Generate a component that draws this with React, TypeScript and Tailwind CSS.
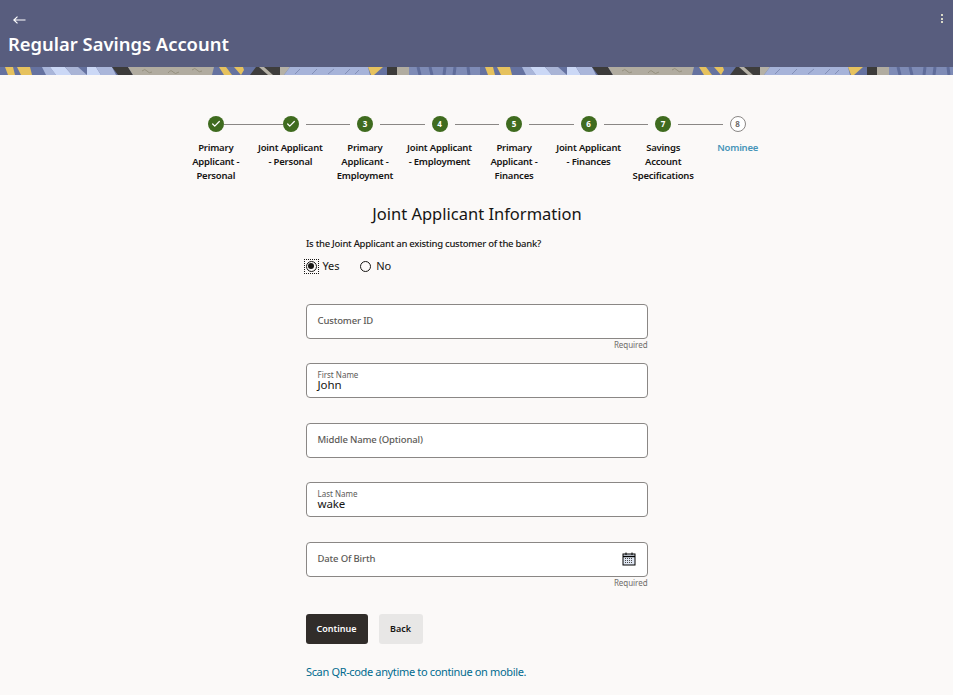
import React from 'react';
import { Check } from 'lucide-react';

type Step = {
  label: string[];
  done?: boolean;
};

const steps: Step[] = [
  { label: ['Primary', 'Applicant -', 'Personal'], done: true },
  { label: ['Joint Applicant', '- Personal'], done: true },
  { label: ['Primary', 'Applicant -', 'Employment'] },
  { label: ['Joint Applicant', '- Employment'] },
  { label: ['Primary', 'Applicant -', 'Finances'] },
  { label: ['Joint Applicant', '- Finances'] },
  { label: ['Savings', 'Account', 'Specifications'] },
];

// one period of the banner artwork, it repeats every 480px
function BannerArt({ x }: { x: number }) {
  return (
    <g transform={`translate(${x} 0)`}>
      <rect x="0" y="0" width="480" height="8" fill="#6572a0" />
      <polygon points="5,0 13,0 15,8 8,8" fill="#e6c25e" />
      <polygon points="17,0 30,0 32,8 21,8" fill="#e6c25e" />
      <polygon points="42,0 50,0 56,8 46,8" fill="#a9b6da" />
      <polygon points="50,0 65,0 72,8 56,8" fill="#cbd8f6" />
      <polygon points="65,0 78,0 87,8 72,8" fill="#a9b4d6" />
      <polygon points="87,0 96,0 101,8 87,8" fill="#cbd8f6" />
      <polygon points="96,0 112,0 116,8 101,8" fill="#aab6da" />
      <polygon points="112,0 128,0 133,8 118,8" fill="#3c3b3a" />
      <polygon points="128,0 214,0 212,8 133,8" fill="#b1aca0" />
      <path d="M142 4 q3 -3 5 0 t5 1 M168 6 q3 -4 5 -1 t6 0 M192 3 q3 -3 5 0 t5 1" stroke="#96917f" strokeWidth="1" fill="none" />
      <polygon points="219,0 226,0 232,8 224,8" fill="#e6c25e" />
      <polygon points="234,0 243,0 244,3 241,8" fill="#e6c25e" />
      <polygon points="256,0 283,0 280,8 250,8" fill="#3e3d3c" />
      <polygon points="259,0 264,0 273,8 268,8" fill="#b5b1a6" />
      <polygon points="280,0 290,0 284,8 280,8" fill="#b5b1a6" />
      <polygon points="290,0 368,0 370,8 284,8" fill="#a6b3d9" />
      <path d="M295 7 l5 -5 M312 7 l5 -5 M328 7 l6 -5 M345 7 l5 -5 M355 7 l4 -4" stroke="#8390b8" strokeWidth="1" />
      <polygon points="368,0 383,0 374,8 371,8" fill="#e6c25e" />
      <rect x="387" y="0" width="10" height="8" fill="#3c3b3a" />
      <rect x="397" y="0" width="12" height="8" fill="#b1aca0" />
      <rect x="409" y="0" width="71" height="8" fill="#7e8bb6" />
      <path d="M418 0 l2 8 M430 0 l2 8 M445 0 l-1 8 M455 0 l-1 8 M468 0 l1 8" stroke="#5f6c9a" strokeWidth="3" />
    </g>
  );
}

function TextField({ label, value, helper, calendar }: { label: string; value?: string; helper?: string; calendar?: boolean }) {
  return (
    <div className="h-[59.5px]">
      <div className="h-[35px] flex items-center justify-between bg-white border border-[#8a8785] rounded-[4px] pl-[11px] pr-[11px]">
        {value ? (
          <div className="flex flex-col pb-[2px]">
            <span className="text-[8px] leading-[9px] text-[#5c5a57]">{label}</span>
            <span className="text-[11.5px] leading-[11px] tracking-[-0.1px] text-[#161513]">{value}</span>
          </div>
        ) : (
          <span className="text-[9.5px] font-medium leading-[14px] tracking-[-0.15px] text-[#5c5a57]">{label}</span>
        )}
        {calendar && (
          <svg width="14" height="14" viewBox="0 0 14 14" fill="none">
            <rect x="1" y="2" width="12" height="11" fill="#dfe6f2" stroke="#000000" strokeWidth="1" />
            <path d="M1 4.5h12" stroke="#000000" strokeWidth="1.4" />
            <path d="M4 0.5v2.5M10 0.5v2.5" stroke="#000000" strokeWidth="1" />
            <path d="M3 6.5h8M3 8.5h8M3 10.5h8" stroke="#4a4846" strokeWidth="1" strokeDasharray="1 1" />
          </svg>
        )}
      </div>
      {helper && <div className="text-right text-[8px] leading-[12px] tracking-[-0.05px] text-[#6f6d6a]">{helper}</div>}
    </div>
  );
}

export default function App() {
  return (
    <div className="min-h-[695px] h-[695px] overflow-hidden bg-[#fbf9f8] text-[#161513] font-['Noto_Sans',sans-serif]">
      <header className="h-[67px] bg-[#585d7e] relative text-white">
        <div className="pt-[14px] pl-[13px] h-[33px]">
          <svg width="13" height="12" viewBox="0 0 13 12" fill="none" stroke="white" strokeWidth="1.2">
            <path d="M0.8 6H12.5M4.5 2.6L0.8 6L4.5 9.4" />
          </svg>
        </div>
        <h1 className="pl-[8px] text-[18.4px] leading-[22px] font-semibold">Regular Savings Account</h1>
        <div className="absolute right-[10px] top-[14px] flex flex-col gap-[1.5px]">
          <span className="w-[2px] h-[2px] bg-[#d9d9c8]" />
          <span className="w-[2px] h-[2px] bg-[#d9d9c8]" />
          <span className="w-[2px] h-[2px] bg-[#d9d9c8]" />
        </div>
      </header>
      <svg className="block w-full h-[8px]" viewBox="0 0 953 8" preserveAspectRatio="none">
        <BannerArt x={0} />
        <BannerArt x={480} />
      </svg>

      <div className="w-[597px] mx-auto pt-[41px] pl-[0.5px]">
        <div className="flex items-center h-[16px] pl-[29.5px] pr-[29.5px]">
          {steps.map((step, i) => (
            <React.Fragment key={i}>
              <div className="w-[16px] h-[16px] shrink-0 rounded-full bg-[#3f6b1f] flex items-center justify-center text-white text-[8px] font-bold leading-none">
                {step.done ? <Check size={10} strokeWidth={3} /> : i + 1}
              </div>
              <div className="flex-1 flex">
                <div className={i === 0 ? 'flex-1 h-px bg-[#8a8785]' : 'flex-1 h-px bg-[#8a8785] mx-[7px]'} />
              </div>
            </React.Fragment>
          ))}
          <div className="w-[16px] h-[16px] shrink-0 rounded-full border border-[#8a8785] bg-white flex items-center justify-center text-[#5c5a57] text-[8px] font-semibold leading-none">
            8
          </div>
        </div>
        <div className="grid grid-cols-8 mt-[9px] h-[46px]">
          {steps.map((step, i) => (
            <div key={i} className="text-center text-[9.5px] leading-[14px] font-semibold tracking-[-0.2px] whitespace-nowrap">
              {step.label.map((line) => (
                <div key={line}>{line}</div>
              ))}
            </div>
          ))}
          <div className="text-center text-[9.5px] leading-[14px] font-semibold tracking-[-0.2px] text-[#4795b8]">Nominee</div>
        </div>
      </div>

      <div className="w-[342px] mx-auto">
        <h2 className="text-center text-[16.5px] leading-[24px] mt-[15px] pl-[1px] whitespace-nowrap">Joint Applicant Information</h2>
        <p className="text-[9.5px] leading-[14px] font-medium tracking-[-0.27px] mt-[11px] pl-[0.5px]">Is the Joint Applicant an existing customer of the bank?</p>
        <div className="flex items-center h-[14px] mt-[8px] text-[11px] leading-[14px] tracking-[-0.1px]">
          <span className="w-[13px] h-[13px] -ml-[1px] outline-1 outline-dotted outline-[#161513] flex items-center justify-center">
            <span className="w-[11px] h-[11px] rounded-full border border-[#161513] flex items-center justify-center">
              <span className="w-[6px] h-[6px] rounded-full bg-[#161513]" />
            </span>
          </span>
          <span className="ml-[5px]">Yes</span>
          <span className="ml-[21px] w-[11px] h-[11px] rounded-full border border-[#161513]" />
          <span className="ml-[5px]">No</span>
        </div>

        <div className="mt-[30.75px]">
          <TextField label="Customer ID" helper="Required" />
          <TextField label="First Name" value="John" />
          <TextField label="Middle Name (Optional)" />
          <TextField label="Last Name" value="wake" />
          <TextField label="Date Of Birth" helper="Required" calendar />
        </div>

        <div className="flex gap-[11px] mt-[12.5px]">
          <button className="w-[62px] h-[30px] rounded-[3px] bg-[#312d2a] text-white text-[9px] font-semibold">Continue</button>
          <button className="w-[44px] h-[30px] rounded-[3px] bg-[#e8e7e6] text-[#161513] text-[9px] font-semibold">Back</button>
        </div>
        <p className="mt-[20px] text-[11px] leading-[16px] tracking-[-0.35px] text-[#006b8f] whitespace-nowrap pl-[0.5px]">Scan QR-code anytime to continue on mobile.</p>
      </div>
    </div>
  );
}
